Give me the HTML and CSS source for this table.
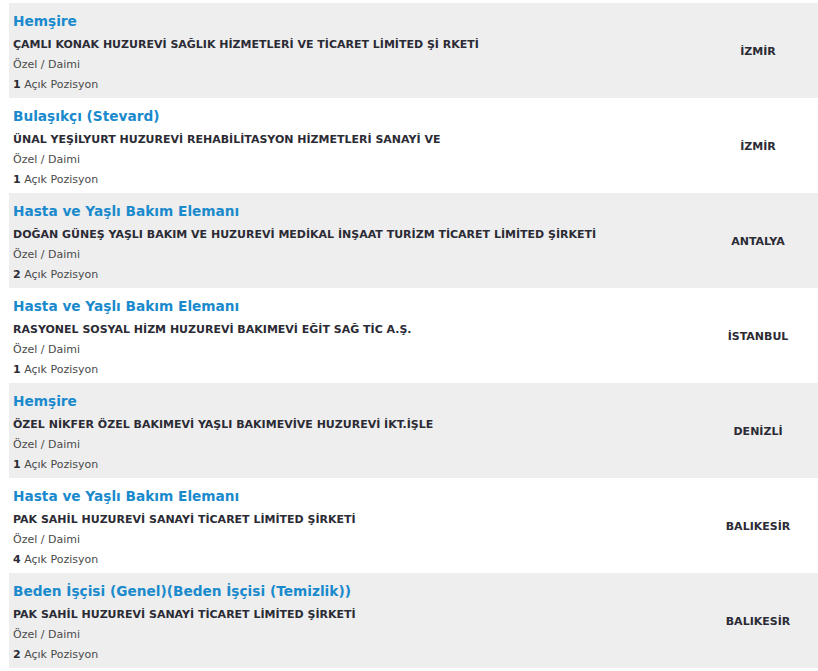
FILE: index.html
```html
<!DOCTYPE html>
<html lang="tr">
<head>
<meta charset="utf-8">
<link rel="stylesheet" href="styles.css">
</head>
<body>
<div class="list">
  <div class="row gray">
    <div class="info">
      <div class="title">Hemşire</div>
      <div class="company">ÇAMLI KONAK HUZUREVİ SAĞLIK HİZMETLERİ VE TİCARET LİMİTED Şİ RKETİ</div>
      <div class="meta">Özel / Daimi</div>
      <div class="meta"><b>1</b> Açık Pozisyon</div>
    </div>
    <div class="city">İZMİR</div>
  </div>
  <div class="row">
    <div class="info">
      <div class="title">Bulaşıkçı (Stevard)</div>
      <div class="company">ÜNAL YEŞİLYURT HUZUREVİ REHABİLİTASYON HİZMETLERİ SANAYİ VE</div>
      <div class="meta">Özel / Daimi</div>
      <div class="meta"><b>1</b> Açık Pozisyon</div>
    </div>
    <div class="city">İZMİR</div>
  </div>
  <div class="row gray">
    <div class="info">
      <div class="title">Hasta ve Yaşlı Bakım Elemanı</div>
      <div class="company">DOĞAN GÜNEŞ YAŞLI BAKIM VE HUZUREVİ MEDİKAL İNŞAAT TURİZM TİCARET LİMİTED ŞİRKETİ</div>
      <div class="meta">Özel / Daimi</div>
      <div class="meta"><b>2</b> Açık Pozisyon</div>
    </div>
    <div class="city">ANTALYA</div>
  </div>
  <div class="row">
    <div class="info">
      <div class="title">Hasta ve Yaşlı Bakım Elemanı</div>
      <div class="company">RASYONEL SOSYAL HİZM HUZUREVİ BAKIMEVİ EĞİT SAĞ TİC A.Ş.</div>
      <div class="meta">Özel / Daimi</div>
      <div class="meta"><b>1</b> Açık Pozisyon</div>
    </div>
    <div class="city">İSTANBUL</div>
  </div>
  <div class="row gray">
    <div class="info">
      <div class="title">Hemşire</div>
      <div class="company">ÖZEL NİKFER ÖZEL BAKIMEVİ YAŞLI BAKIMEVİVE HUZUREVİ İKT.İŞLE</div>
      <div class="meta">Özel / Daimi</div>
      <div class="meta"><b>1</b> Açık Pozisyon</div>
    </div>
    <div class="city">DENİZLİ</div>
  </div>
  <div class="row">
    <div class="info">
      <div class="title">Hasta ve Yaşlı Bakım Elemanı</div>
      <div class="company">PAK SAHİL HUZUREVİ SANAYİ TİCARET LİMİTED ŞİRKETİ</div>
      <div class="meta">Özel / Daimi</div>
      <div class="meta"><b>4</b> Açık Pozisyon</div>
    </div>
    <div class="city">BALIKESİR</div>
  </div>
  <div class="row gray">
    <div class="info">
      <div class="title">Beden İşçisi (Genel)(Beden İşçisi (Temizlik))</div>
      <div class="company">PAK SAHİL HUZUREVİ SANAYİ TİCARET LİMİTED ŞİRKETİ</div>
      <div class="meta">Özel / Daimi</div>
      <div class="meta"><b>2</b> Açık Pozisyon</div>
    </div>
    <div class="city">BALIKESİR</div>
  </div>
</div>
</body>
</html>
```
FILE: styles.css
```css
html, body {
  margin: 0;
  padding: 0;
  background: #ffffff;
}
body {
  padding: 3px 0 0 9px;
  font-family: "DejaVu Sans", Verdana, sans-serif;
  color: #333;
}
.list {
  display: flex;
  flex-direction: column;
}
.row {
  display: flex;
  align-items: center;
  height: 95px;
  box-sizing: border-box;
  background: #ffffff;
}
.row.gray {
  background: #eeeeee;
}
.info {
  flex: 1;
  padding: 9px 4px 3px 4px;
  box-sizing: border-box;
  height: 95px;
}
.title {
  font-size: 13.7px;
  font-weight: bold;
  color: #1a8acd;
  line-height: 18px;
  margin-bottom: 5px;
  white-space: nowrap;
}
.company {
  font-size: 11px;
  font-weight: bold;
  color: #2b2b35;
  line-height: 20px;
  white-space: nowrap;
}
.meta {
  font-size: 11px;
  color: #4a4a4a;
  line-height: 20px;
}
.meta b {
  color: #2b2b35;
}
.city {
  width: 120px;
  padding-top: 2px;
  text-align: center;
  font-size: 11px;
  font-weight: bold;
  color: #2b2b35;
}
```
